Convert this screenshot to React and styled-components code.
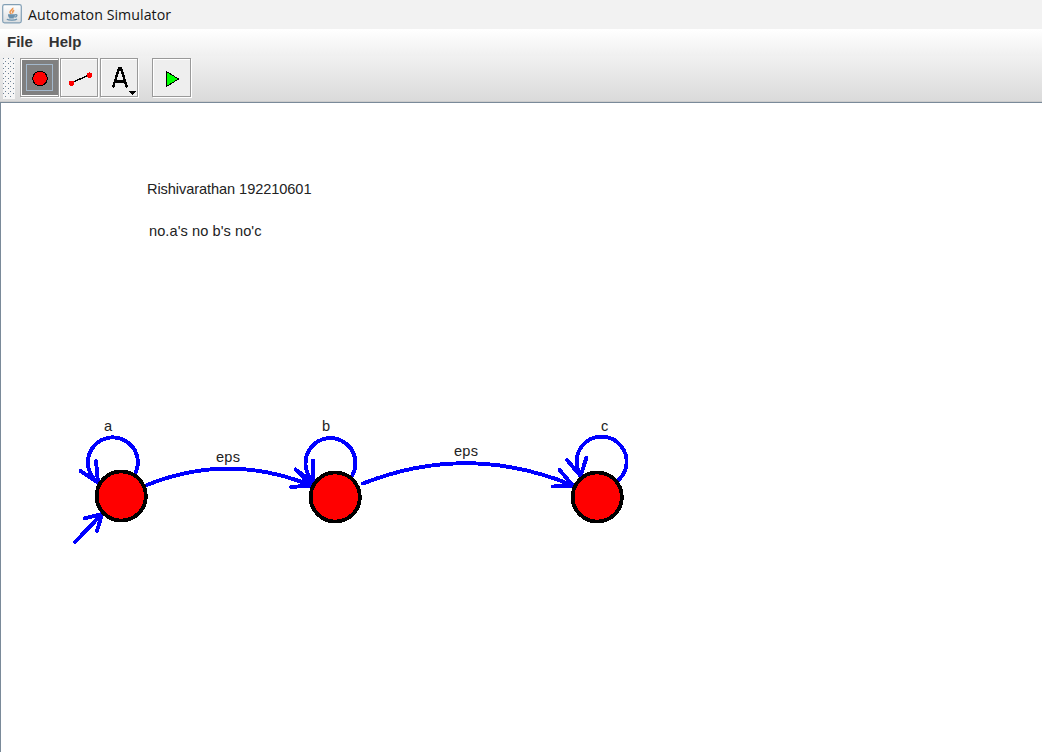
import React from 'react';
import styled, { createGlobalStyle } from 'styled-components';

const Global = createGlobalStyle`
  html, body { margin: 0; padding: 0; background: #fff; }
  body { overflow: hidden; }
`;

const Window = styled.div`
  width: 1042px;
  height: 752px;
  display: flex;
  flex-direction: column;
  overflow: hidden;
  font-family: 'Liberation Sans', Arial, sans-serif;
`;

const TitleBar = styled.header`
  height: 29px;
  box-sizing: border-box;
  padding-left: 2px;
  padding-bottom: 1px;
  display: flex;
  align-items: center;
  gap: 6px;
  background: #f2f2f2;
  color: #151515;
  font-family: 'Open Sans', 'Noto Sans', sans-serif;
`;

const Title = styled.span`
  font-size: 14.2px;
  line-height: 20px;
  letter-spacing: 0.04px;
  white-space: nowrap;
  padding-top: 2px;
`;

const MenuBar = styled.nav`
  height: 27px;
  box-sizing: border-box;
  display: flex;
  align-items: center;
  gap: 16px;
  padding: 0 0 2px 7px;
  background: linear-gradient(#ffffff, #f0f0f0);
`;

const MenuItem = styled.span`
  font-size: 15px;
  line-height: 18px;
  font-weight: bold;
  color: #333;
`;

const ToolBar = styled.div`
  height: 46px;
  box-sizing: border-box;
  display: flex;
  align-items: flex-start;
  padding: 2px 0 0 3px;
  background: linear-gradient(#f1f1f1, #dadada);
  border-bottom: 1px solid #cccccc;
`;

const Grip = styled.svg`
  display: block;
  margin-right: 5px;
`;

const ToolButton = styled.button`
  box-sizing: border-box;
  width: ${p => p.$width || 39}px;
  height: 39px;
  margin: 0 ${p => p.$gap || 1}px 0 0;
  padding: 0;
  border: 1px solid #999;
  background: ${p => (p.$active ? '#808080' : '#eeeeee')};
  box-shadow: ${p => (p.$active
    ? '1px 1px 0 #fff, inset 1px 1px 0 #fff, inset 0 -1px 0 #fff'
    : '1px 1px 0 #fff, inset 1px 1px 0 #fff')};
  overflow: hidden;
  display: block;
`;

const Icon = styled.svg`
  display: block;
`;

const Canvas = styled.main`
  flex: 1;
  box-sizing: border-box;
  border-top: 1px solid #7a8a99;
  border-left: 1px solid #7a8a99;
  background: #fff;
`;

const Diagram = styled.svg`
  display: block;
  text {
    font: 14.6px 'Liberation Sans', Arial, sans-serif;
    fill: #222;
  }
`;

const edges = [
  'M135.5 473A25 25 0 1 0 98 482.5M80.5 471L98 482.5L96 461',
  'M75 542L102 514M84.5 518.5L102 514L97 531',
  'M147 485Q229 452 311 485.5M291 487L311 485.5L296 470',
  'M352.5 475A25 25 0 1 0 313 481M295.5 469.5L313 482L313 460.5',
  'M363 483.5Q468 442 573 485.5M553 486.5L573 485.5L559.5 470',
  'M618.5 480A25 25 0 1 0 580.5 475M567 460L580.5 476L586.5 457.5',
];

const states = [
  [121.2, 496],
  [335.2, 497],
  [597.2, 497],
];

const labels = [
  [147, 194, 'Rishivarathan 192210601', 164.5],
  [149, 236, "no.a's no b's no'c", 112.5],
  [104, 431, 'a', 8],
  [216, 462, 'eps', 24],
  [322, 431, 'b', 8],
  [454, 456, 'eps', 24],
  [601, 431, 'c', 7],
];

const gripDots = [];
for (let row = 0; row < 16; row += 1) {
  for (let x = row % 2 ? 2 : 0; x < 13; x += 5) {
    gripDots.push([x, Math.round(row * 2.5)]);
  }
}

function JavaIcon() {
  return (
    <Icon width="20" height="20" viewBox="0 0 20 20" fill="none">
      <defs>
        <linearGradient id="cupTile" x2="0" y2="1">
          <stop stopColor="#fff" />
          <stop offset="1" stopColor="#d8dcdf" />
        </linearGradient>
      </defs>
      <rect x="0.7" y="0.7" width="18.6" height="18.2" rx="1.8" fill="url(#cupTile)" stroke="#829fb5" strokeWidth="1.2" />
      <path d="M10.8 3.8C11.3 5.6 7.7 6.5 8 8.3C8.2 9.2 9 9.6 9.2 10.2M12.2 6.3C10.6 7 10.2 8 10.8 9.4" stroke="#ec9551" strokeWidth="1.5" />
      <path d="M6 11h7.3M6.4 12.5h6.2M7.2 13.9h4.6M13 10.8c3-.8 2.2 2-.4 2.4M4.8 15.2c2 1.2 8.4 1.2 10.2-.2" stroke="#6b91ad" strokeWidth="1.3" />
    </Icon>
  );
}

export default function App() {
  return (
    <Window>
      <Global />
      <TitleBar>
        <JavaIcon />
        <Title>Automaton Simulator</Title>
      </TitleBar>
      <MenuBar>
        <MenuItem>File</MenuItem>
        <MenuItem>Help</MenuItem>
      </MenuBar>
      <ToolBar>
        <Grip width="12" height="41" shapeRendering="crispEdges">
          <rect width="12" height="41" fill="#f6f6f6" />
          {gripDots.map(([x, y]) => (
            <rect key={`${x}-${y}`} x={x} y={y} width="1" height="1" fill="#6f8296" />
          ))}
        </Grip>
        <ToolButton $active>
          <Icon width="37" height="37" shapeRendering="crispEdges">
            <rect x="5.5" y="5.5" width="26" height="26" fill="none" stroke="#a3b8cc" />
            <circle cx="19" cy="19.5" r="7.3" fill="#f00" stroke="#000" />
          </Icon>
        </ToolButton>
        <ToolButton $width={38} $gap={2}>
          <Icon width="37" height="37" shapeRendering="crispEdges">
            <path d="M10 24L28 16" stroke="#000" strokeWidth="1.4" />
            <circle cx="10.5" cy="24.3" r="2.8" fill="#f00" />
            <circle cx="28.3" cy="16.2" r="2.8" fill="#f00" />
          </Icon>
        </ToolButton>
        <ToolButton $width={38} $gap={14}>
          <Icon width="37" height="37" shapeRendering="crispEdges">
            <path d="M12 28.5L18 9.2H20L26 28.5M14 22.5H24" fill="none" stroke="#000" strokeWidth="2.4" />
            <path d="M27 32h8l-4 4z" />
          </Icon>
        </ToolButton>
        <ToolButton>
          <Icon width="37" height="37" shapeRendering="crispEdges">
            <path d="M13.5 12.5V27.5L25.5 20Z" fill="#0f0" stroke="#000" />
          </Icon>
        </ToolButton>
      </ToolBar>
      <Canvas>
        <Diagram width="1041" height="649" viewBox="1 103 1041 649">
          <g fill="none" stroke="#00f" strokeWidth="3.9" strokeLinecap="round" shapeRendering="crispEdges">
            {edges.map(d => <path key={d} d={d} />)}
          </g>
          <g fill="#f00" stroke="#000" strokeWidth="3.8" shapeRendering="crispEdges">
            {states.map(([x, y]) => <circle key={x} cx={x} cy={y} r="24.6" />)}
          </g>
          {labels.map(([x, y, t, w]) => (
            <text key={`${x}`} x={x} y={y} textLength={w}>{t}</text>
          ))}
        </Diagram>
      </Canvas>
    </Window>
  );
}
